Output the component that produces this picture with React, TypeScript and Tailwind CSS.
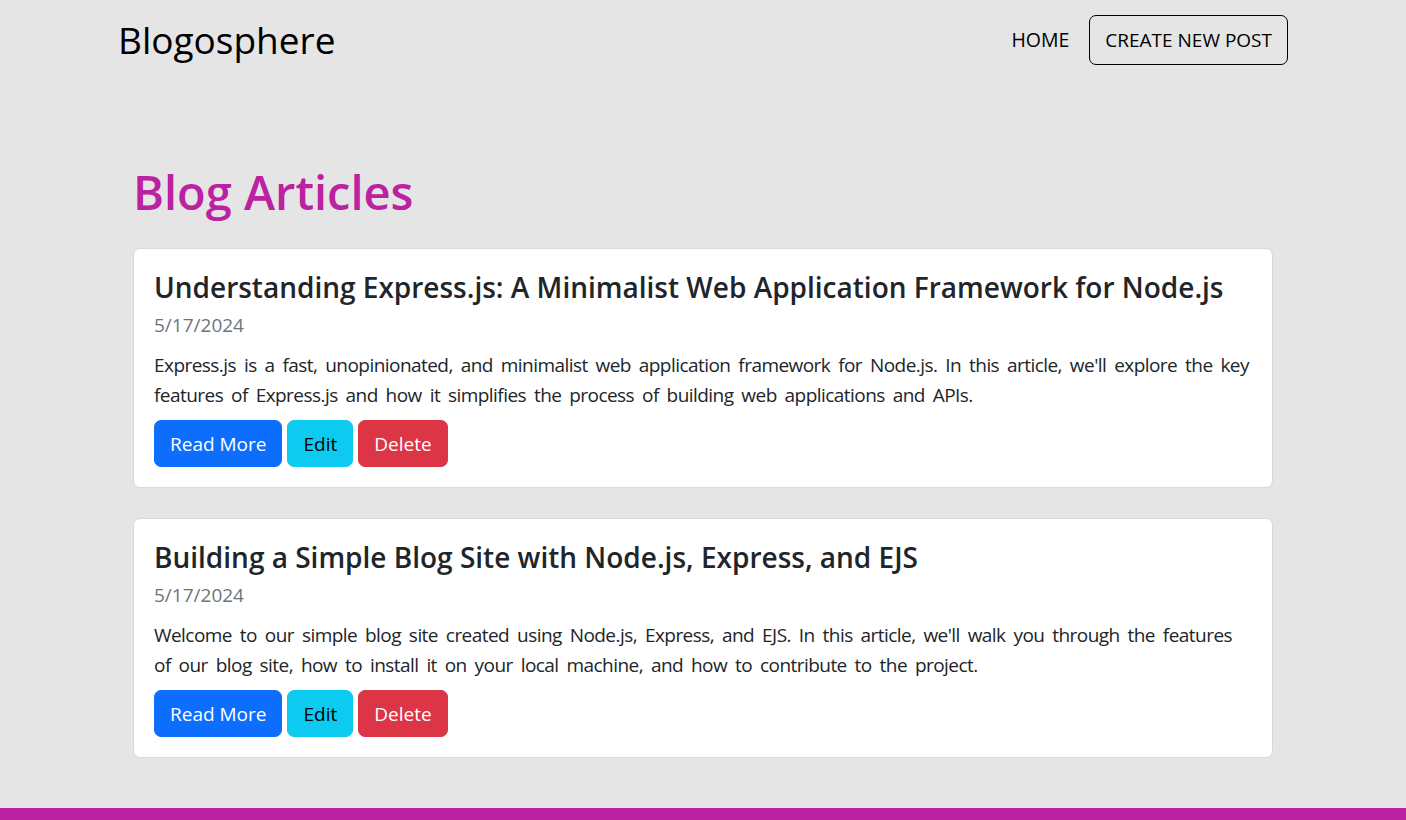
const posts = [
  {
    title: "Understanding Express.js: A Minimalist Web Application Framework for Node.js",
    date: "5/17/2024",
    body: "Express.js is a fast, unopinionated, and minimalist web application framework for Node.js. In this article, we'll explore the key features of Express.js and how it simplifies the process of building web applications and APIs.",
  },
  {
    title: "Building a Simple Blog Site with Node.js, Express, and EJS",
    date: "5/17/2024",
    body: "Welcome to our simple blog site created using Node.js, Express, and EJS. In this article, we'll walk you through the features of our blog site, how to install it on your local machine, and how to contribute to the project.",
  },
];

const App = () => {
  return (
    <div className="min-h-screen bg-[#e5e5e5] text-[#212529] font-['Open_Sans',sans-serif] text-[19px] leading-[30px]">
      {/* Navbar */}
      <nav className="py-[15px]">
        <div className="w-[1170px] mx-auto flex items-center justify-between">
          <a href="#" className="text-[37px] leading-[50px] text-black">
            Blogosphere
          </a>
          <div className="flex items-center gap-5">
            <a href="#" className="text-black uppercase text-[19.5px]">
              Home
            </a>
            <button className="h-[50px] px-[15px] border border-black rounded-[7px] text-black uppercase text-[19px]">
              Create New Post
            </button>
          </div>
        </div>
      </nav>

      {/* Articles */}
      <main className="w-[1140px] mx-auto pt-[82px] pb-[20px]">
        <h1 className="text-[47px] leading-[60px] font-semibold text-[#bb22a1] mb-[26px]">
          Blog Articles
        </h1>

        {posts.map((post, index) => (
          <div
            key={index}
            className="bg-white border border-[#d9d9d9] rounded-[7px] p-5 mb-[30px]"
          >
            <h4 className="text-[28px] leading-[36px] font-semibold mb-[10px]">
              {post.title}
            </h4>
            <div className="-mt-[5px] mb-[10px] text-[#6c757d]">{post.date}</div>
            <p className="mb-[10px] tracking-[-0.55px] [word-spacing:3.5px]">{post.body}</p>
            <div className="flex gap-[5px]">
              <button className="px-[15px] py-[7.5px] leading-[30px] rounded-[7px] bg-[#0d6efd] text-white border border-[#0d6efd]">
                Read More
              </button>
              <button className="px-[15px] py-[7.5px] leading-[30px] rounded-[7px] bg-[#0dcaf0] text-black border border-[#0dcaf0]">
                Edit
              </button>
              <button className="px-[15px] py-[7.5px] leading-[30px] rounded-[7px] bg-[#dc3545] text-white border border-[#dc3545]">
                Delete
              </button>
            </div>
          </div>
        ))}
      </main>

      {/* Footer */}
      <footer className="bg-[#bb22a1] h-[60px]" />
    </div>
  );
};

export default App;
